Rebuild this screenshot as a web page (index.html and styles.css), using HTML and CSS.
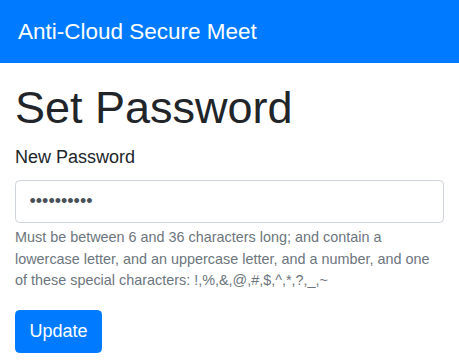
FILE: index.html
```html
<!DOCTYPE html>
<html lang="en">
<head>
<meta charset="utf-8">
<title>Set Password</title>
<link rel="stylesheet" href="styles.css">
</head>
<body>
<nav class="navbar">
  <a class="brand" href="#">Anti-Cloud Secure Meet</a>
</nav>
<main class="container">
  <h1 class="title">Set Password</h1>
  <form class="form">
    <div class="form-group">
      <label class="label" for="pw">New Password</label>
      <input class="control" id="pw" type="password" value="abcdefghij">
      <small class="help">Must be between 6 and 36 characters long; and contain a lowercase letter, and an uppercase letter, and a number, and one of these special characters: !,%,&amp;,@,#,$,^,*,?,_,~</small>
    </div>
    <button class="btn" type="button">Update</button>
  </form>
</main>
</body>
</html>
```
FILE: styles.css
```css
* { box-sizing: border-box; }
html, body { margin: 0; padding: 0; }
body {
  font-family: "Liberation Sans", Arial, sans-serif;
  font-size: 18px;
  line-height: 1.5;
  color: #212529;
  background: #fff;
}
.navbar {
  background: #007bff;
  height: 63px;
  padding: 0 18px;
  display: flex;
  align-items: center;
}
.brand {
  color: #fff;
  text-decoration: none;
  font-size: 22.5px;
  line-height: 1.5;
}
.container {
  padding: 0 15px;
}
.title {
  margin: 18px 0 9px;
  font-size: 45px;
  font-weight: 500;
  line-height: 1.2;
}
.form { margin: 0; }
.form-group { margin-bottom: 18px; }
.label {
  display: inline-block;
  margin-bottom: 9px;
}
.control {
  display: block;
  width: 100%;
  height: 42.75px;
  padding: 6.75px 13.5px;
  font-family: inherit;
  font-size: 18px;
  line-height: 1.5;
  color: #495057;
  background: #fff;
  border: 1px solid #ced4da;
  border-radius: 4.5px;
  outline: none;
}
.help {
  display: block;
  margin-top: 4.5px;
  font-size: 14.4px;
  line-height: 1.5;
  color: #6c757d;
}
.btn {
  display: inline-block;
  font-family: inherit;
  font-size: 18px;
  line-height: 1.5;
  padding: 6.75px 13.5px;
  color: #fff;
  background: #007bff;
  border: 1px solid #007bff;
  border-radius: 4.5px;
  cursor: pointer;
}
```
